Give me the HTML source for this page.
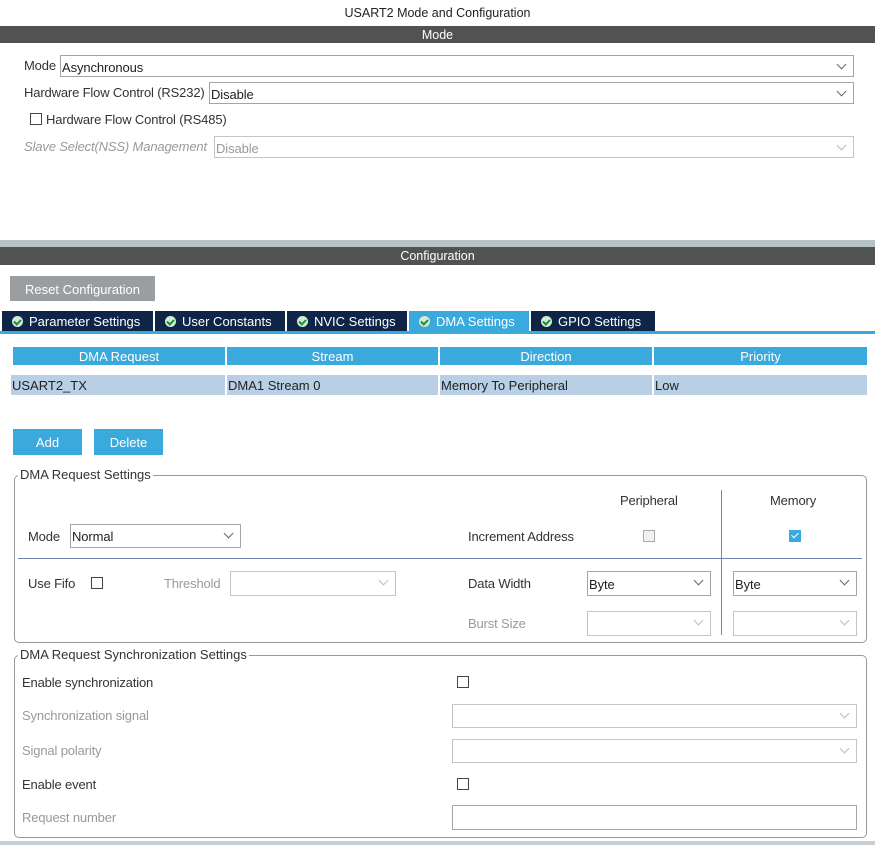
<!DOCTYPE html>
<html><head><meta charset="utf-8"><style>
*{box-sizing:border-box;margin:0;padding:0}
body{width:875px;height:845px;background:#fff;font-family:"Liberation Sans",Arial,sans-serif;font-size:13px;color:#333;position:relative;overflow:hidden}
.a{position:absolute;white-space:nowrap}
.bar{position:absolute;left:0;width:875px;background:#505351;color:#fff;text-align:center;font-size:12.5px}
.sel{position:absolute;border:1px solid #a5a5a5;background:#fff;height:22px;line-height:21px;padding-top:1px;padding-left:1px;color:#222;letter-spacing:-0.1px}
.sel.d{color:#999;border-color:#c4c4c4}
.sel::after{content:"";position:absolute;right:8px;top:5px;width:6px;height:6px;border-right:1px solid #666;border-bottom:1px solid #666;transform:rotate(45deg)}
.sel.d::after{border-color:#bbb}
.sel.n::after{display:none}
.cb{position:absolute;width:12px;height:12px;border:1px solid #444;background:#fff}
.lbl{position:absolute;white-space:nowrap;line-height:16px;padding-top:1px;letter-spacing:-0.15px}
.g{color:#999}
.tab{position:absolute;top:311px;height:20px;background:#0f2548;color:#fff;line-height:21px;font-size:13px;padding-left:10px}
.tab i{display:inline-block;width:11px;height:11px;border-radius:50%;background:#d6e9d4;margin-right:6px;vertical-align:-1px;position:relative}
.tab i::after{content:"";position:absolute;left:3px;top:2px;width:3px;height:5px;border-right:2px solid #1b8f3b;border-bottom:2px solid #1b8f3b;transform:rotate(45deg)}
.th{position:absolute;top:347px;height:18px;background:#3aa9dc;color:#fff;text-align:center;line-height:20px}
.td{position:absolute;top:375px;height:20px;background:#b8cfe6;line-height:21px;color:#222;padding-left:1px}
.btn{position:absolute;background:#3aa9dc;color:#fff;text-align:center;line-height:27px;height:26px}
.fs{position:absolute;border:1px solid #999;border-radius:5px}
.leg{position:absolute;background:#fff;padding:0 2px;line-height:16px;color:#333}
</style></head><body>
<div class="a" style="left:0;width:875px;top:6px;text-align:center;font-size:12.5px;color:#222">USART2 Mode and Configuration</div>
<div class="bar" style="top:26px;height:17px;line-height:18px">Mode</div>
<div class="lbl" style="left:24px;top:57px">Mode</div>
<div class="sel" style="left:60px;top:55px;width:794px">Asynchronous</div>
<div class="lbl" style="left:24px;top:84px">Hardware Flow Control (RS232)</div>
<div class="sel" style="left:209px;top:82px;width:645px">Disable</div>
<div class="cb" style="left:30px;top:113px"></div>
<div class="lbl" style="left:46px;top:111px">Hardware Flow Control (RS485)</div>
<div class="lbl g" style="left:24px;top:138px;font-style:italic">Slave Select(NSS) Management</div>
<div class="sel d" style="left:214px;top:136px;width:640px">Disable</div>

<div class="a" style="left:0;top:240px;width:875px;height:7px;background:#b8c2c9"></div>
<div class="bar" style="top:247px;height:18px;line-height:19px">Configuration</div>
<div class="a" style="left:10px;top:276px;width:145px;height:25px;background:#9a9ea1;color:#fff;text-align:center;line-height:27px">Reset Configuration</div>

<div class="tab" style="left:2px;width:151px"><i></i>Parameter Settings</div>
<div class="tab" style="left:155px;width:130px"><i></i>User Constants</div>
<div class="tab" style="left:287px;width:120px"><i></i>NVIC Settings</div>
<div class="tab" style="left:409px;width:120px;background:#3aa9dc"><i></i>DMA Settings</div>
<div class="tab" style="left:531px;width:124px"><i></i>GPIO Settings</div>
<div class="a" style="left:0;top:331px;width:875px;height:3px;background:#3aa9dc"></div>

<div class="th" style="left:13px;width:212px">DMA Request</div>
<div class="th" style="left:227px;width:211px">Stream</div>
<div class="th" style="left:440px;width:212px">Direction</div>
<div class="th" style="left:654px;width:213px">Priority</div>
<div class="td" style="left:11px;width:214px">USART2_TX</div>
<div class="td" style="left:227px;width:211px">DMA1 Stream 0</div>
<div class="td" style="left:440px;width:212px">Memory To Peripheral</div>
<div class="td" style="left:654px;width:213px">Low</div>

<div class="btn" style="left:13px;top:429px;width:69px">Add</div>
<div class="btn" style="left:94px;top:429px;width:69px">Delete</div>

<div class="fs" style="left:14px;top:475px;width:853px;height:168px"></div>
<div class="leg" style="left:18px;top:467px">DMA Request Settings</div>
<div class="lbl" style="left:28px;top:528px">Mode</div>
<div class="sel" style="left:70px;top:524px;width:171px;height:24px;line-height:22px">Normal</div>
<div class="a" style="left:18px;top:558px;width:844px;height:1px;background:#6b84b0"></div>
<div class="a" style="left:721px;top:490px;width:1px;height:145px;background:#6b84b0"></div>
<div class="lbl" style="left:28px;top:575px">Use Fifo</div>
<div class="cb" style="left:91px;top:577px"></div>
<div class="lbl g" style="left:164px;top:575px">Threshold</div>
<div class="sel d" style="left:230px;top:571px;width:166px;height:25px"></div>
<div class="lbl" style="left:620px;top:492px">Peripheral</div>
<div class="lbl" style="left:770px;top:492px">Memory</div>
<div class="lbl" style="left:468px;top:528px">Increment Address</div>
<div class="cb" style="left:643px;top:530px;border-color:#aaa;background:#f0f0f0"></div>
<div class="a" style="left:789px;top:530px;width:12px;height:12px;background:#3aa9dc"><div style="position:absolute;left:4px;top:1px;width:4px;height:7px;border-right:1.5px solid #fff;border-bottom:1.5px solid #fff;transform:rotate(45deg)"></div></div>
<div class="lbl" style="left:468px;top:575px">Data Width</div>
<div class="sel" style="left:587px;top:571px;width:124px;height:25px;line-height:23px">Byte</div>
<div class="sel" style="left:733px;top:571px;width:124px;height:25px;line-height:23px">Byte</div>
<div class="lbl g" style="left:468px;top:615px">Burst Size</div>
<div class="sel d" style="left:587px;top:611px;width:124px;height:25px"></div>
<div class="sel d" style="left:733px;top:611px;width:124px;height:25px"></div>

<div class="fs" style="left:14px;top:655px;width:853px;height:183px"></div>
<div class="leg" style="left:18px;top:647px">DMA Request Synchronization Settings</div>
<div class="lbl" style="left:22px;top:674px">Enable synchronization</div>
<div class="cb" style="left:457px;top:676px"></div>
<div class="lbl g" style="left:22px;top:707px">Synchronization signal</div>
<div class="sel d" style="left:452px;top:704px;width:405px;height:24px"></div>
<div class="lbl g" style="left:22px;top:742px">Signal polarity</div>
<div class="sel d" style="left:452px;top:739px;width:405px;height:24px"></div>
<div class="lbl" style="left:22px;top:776px">Enable event</div>
<div class="cb" style="left:457px;top:778px"></div>
<div class="lbl g" style="left:22px;top:809px">Request number</div>
<div class="sel n" style="left:452px;top:805px;width:405px;height:25px"></div>
<div class="a" style="left:0;top:841px;width:875px;height:4px;background:#c8d0d6"></div>
</body></html>
